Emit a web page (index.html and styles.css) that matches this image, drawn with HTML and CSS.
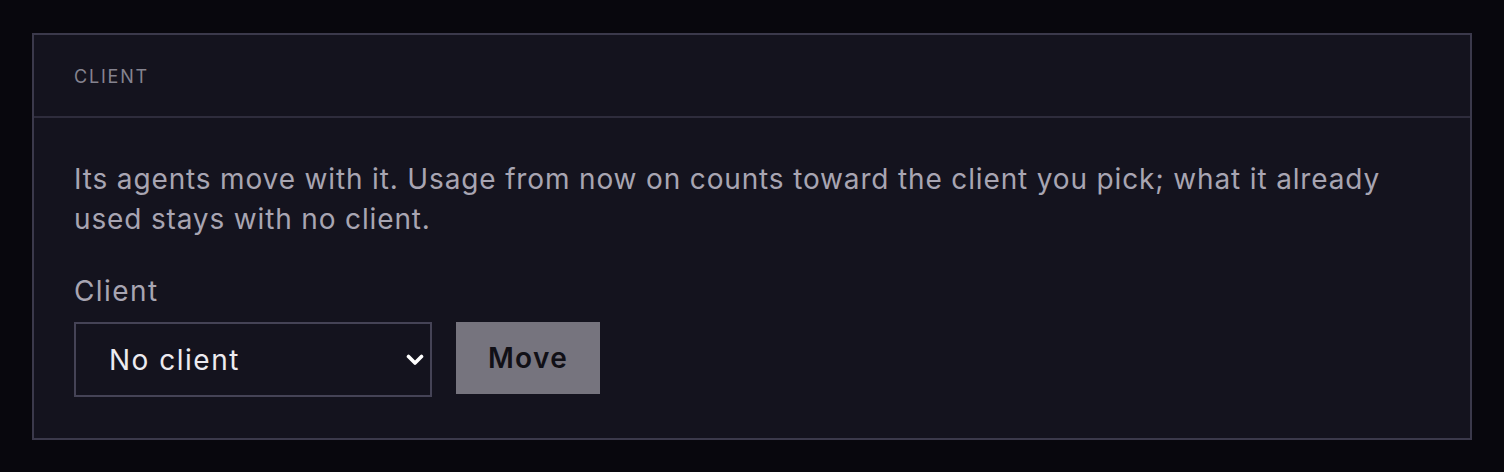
FILE: index.html
```html
<!DOCTYPE html>
<html lang="en">
<head>
<meta charset="utf-8">
<title>Client</title>
<link rel="stylesheet" href="styles.css">
</head>
<body>
<main class="page">
  <section class="card">
    <header class="card-head">
      <h2 class="card-title">CLIENT</h2>
    </header>
    <div class="card-body">
      <p class="desc">Its agents move with it. Usage from now on counts toward the client you pick; what it already used stays with no client.</p>
      <label class="field-label" for="client">Client</label>
      <div class="row">
        <div class="select-wrap">
          <select id="client" class="select">
            <option>No client</option>
          </select>
          <svg class="chev" width="18" height="12" viewBox="0 0 18 12" aria-hidden="true"><path d="M2.5 2.5 L9 9 L15.5 2.5" fill="none" stroke="#ffffff" stroke-width="3.6" stroke-linecap="round" stroke-linejoin="round"/></svg>
        </div>
        <button class="btn" type="button">Move</button>
      </div>
    </div>
  </section>
</main>
</body>
</html>
```
FILE: styles.css
```css
html, body {
  margin: 0;
  padding: 0;
  background: #08070d;
}
body {
  font-family: "Inter", "Noto Sans", "DejaVu Sans", sans-serif;
  color: #a8a5b2;
}
.page {
  padding: 33px 32px 32px 32px;
}
.card {
  background: #14131e;
  border: 2px solid #3b394b;
  height: 403px;
  box-sizing: content-box;
}
.card-head {
  height: 79px;
  padding: 2px 40px 0 40px;
  border-bottom: 2px solid #2e2c3c;
  display: flex;
  align-items: center;
}
.card-title {
  margin: 0;
  font-size: 18px;
  font-weight: 400;
  letter-spacing: 1.8px;
  color: #85838f;
}
.card-body {
  padding: 41px 40px 0 40px;
  display: flex;
  flex-direction: column;
  align-items: flex-start;
}
.desc {
  margin: 0;
  font-size: 28px;
  line-height: 40px;
  letter-spacing: 0.85px;
  color: #a8a5b2;
}
.field-label {
  margin-top: 34px;
  font-size: 28px;
  line-height: 36px;
  letter-spacing: 1.4px;
  color: #a8a5b2;
}
.row {
  margin-top: 13px;
  display: flex;
  align-items: flex-start;
  gap: 24px;
}
.select-wrap {
  position: relative;
}
.select {
  appearance: none;
  -webkit-appearance: none;
  width: 358px;
  height: 75px;
  box-sizing: border-box;
  border: 2px solid #454356;
  border-radius: 0;
  background: #14131e;
  color: #ecebf0;
  font-family: inherit;
  font-size: 28px;
  letter-spacing: 1.5px;
  padding: 0 50px 0 33px;
  margin: 0;
}
.chev {
  position: absolute;
  right: 8px;
  top: 32px;
  pointer-events: none;
}
.btn {
  width: 144px;
  height: 72px;
  border: 0;
  border-radius: 0;
  background: #76747e;
  color: #111016;
  font-family: inherit;
  font-size: 28px;
  font-weight: 600;
  letter-spacing: 1.35px;
  padding: 0;
  margin: 0;
}
```
